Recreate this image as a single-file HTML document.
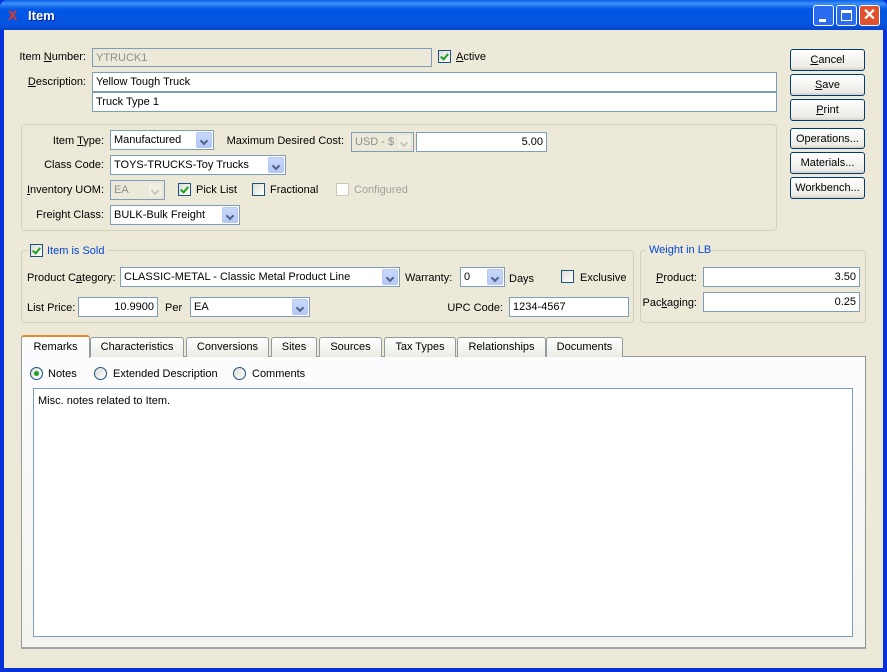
<!DOCTYPE html>
<html><head><style>
*{box-sizing:border-box;margin:0;padding:0}
body{width:887px;height:672px;overflow:hidden;background:#0831D9;font-family:"Liberation Sans",sans-serif;font-size:11px;color:#000;position:relative}
.win{position:absolute;left:4px;top:30px;width:879px;height:638px;background:#ECE9D8}
.title{position:absolute;left:0;top:0;width:887px;height:30px;background:linear-gradient(#0A5FEB 0%,#3D8FF7 12%,#0058E6 30%,#0553E0 80%,#0846C8 100%);border-radius:7px 7px 0 0}
.a{position:absolute;white-space:nowrap}
.in{position:absolute;border:1px solid #7F9DB9;background:#fff;padding:3px 3px;height:20px;line-height:13px;white-space:nowrap;overflow:hidden}
.r{text-align:right}
.dis{background:#ECE9D8;color:#8E8E8E}
.arr{position:absolute;right:1px;top:1px;bottom:1px;width:16px;background:linear-gradient(#C9D9FB,#B4C8F6);border-radius:2px;border:1px solid #B6C8F5}
.arr:after{content:"";position:absolute;left:4px;top:5px;width:4px;height:4px;border-right:2px solid #4D6185;border-bottom:2px solid #4D6185;transform:rotate(45deg)}
.dis .arr{background:#F1EFE4;border-color:#E4E2D6}
.dis .arr:after{border-color:#C9C7BA}
.cb{position:absolute;width:13px;height:13px;border:1px solid #1C5180;background:linear-gradient(135deg,#DCDCD7,#fff)}
.cb.ck:after{content:"";position:absolute;left:3px;top:1px;width:3px;height:6px;border-right:2px solid #21A121;border-bottom:2px solid #21A121;transform:rotate(40deg)}
.cb.d{border-color:#CAC8BB;background:#fff}
.btn{position:absolute;left:790px;width:75px;border:1px solid #003C74;border-radius:3px;background:linear-gradient(#fff,#ECEBE6 85%,#D6D0C5);text-align:center;line-height:20px}
.grp{position:absolute;border:1px solid #D0D0BF;border-radius:4px}
.tab{position:absolute;top:337px;height:20px;border:1px solid #919B9C;border-bottom:none;border-radius:3px 3px 0 0;background:linear-gradient(#fff,#ECEBE5);text-align:center;line-height:19px}
.rad{position:absolute;top:367px;width:13px;height:13px;border:1px solid #1C5180;border-radius:50%;background:linear-gradient(135deg,#DCDCD7,#fff)}
u{text-decoration:underline}
</style></head><body>
<div class="title">
 <div class="a" style="left:8px;top:7px;color:#E8361C;font-weight:bold;font-size:14px">X</div>
 <div class="a" style="left:28px;top:8px;color:#fff;font-weight:bold;font-size:13px;text-shadow:1px 1px #0A1E80">Item</div>
 <div class="a" style="left:813px;top:5px;width:21px;height:21px;border:1px solid #fff;border-radius:3px;background:#2B6BF0"><div style="position:absolute;left:5px;top:13px;width:7px;height:3px;background:#fff"></div></div>
 <div class="a" style="left:836px;top:5px;width:21px;height:21px;border:1px solid #fff;border-radius:3px;background:#2B6BF0"><div style="position:absolute;left:4px;top:4px;width:11px;height:11px;border:1px solid #fff;border-top:3px solid #fff"></div></div>
 <div class="a" style="left:859px;top:5px;width:21px;height:21px;border:1px solid #fff;border-radius:3px;background:#E0522E;color:#fff;font-weight:bold;font-size:16px;text-align:center;line-height:19px">✕</div>
</div>
<div class="win"></div>

<div class="a" style="right:801px;top:51px">Item <u>N</u>umber:</div>
<div class="in dis" style="left:92px;top:48px;width:340px;height:19px">YTRUCK1</div>
<div class="cb ck" style="left:438px;top:50px"></div>
<div class="a" style="left:456px;top:51px"><u>A</u>ctive</div>
<div class="a" style="right:801px;top:76px"><u>D</u>escription:</div>
<div class="in" style="left:92px;top:72px;width:685px">Yellow Tough Truck</div>
<div class="in" style="left:92px;top:92px;width:685px">Truck Type 1</div>

<div class="btn" style="top:49px;height:22px"><u>C</u>ancel</div>
<div class="btn" style="top:74px;height:22px"><u>S</u>ave</div>
<div class="btn" style="top:99px;height:22px"><u>P</u>rint</div>
<div class="btn" style="top:128px;height:21px">Operations...</div>
<div class="btn" style="top:152px;height:22px">Materials...</div>
<div class="btn" style="top:177px;height:22px">Workbench...</div>

<div class="grp" style="left:21px;top:124px;width:756px;height:107px"></div>
<div class="a" style="right:783px;top:135px">Item <u>T</u>ype:</div>
<div class="in" style="left:110px;top:130px;width:104px">Manufactured<div class="arr"></div></div>
<div class="a" style="right:543px;top:135px">Maximum Desired Cost:</div>
<div class="in dis" style="left:351px;top:132px;width:63px">USD - $<div class="arr"></div></div>
<div class="in r" style="left:416px;top:132px;width:131px">5.00</div>
<div class="a" style="right:783px;top:159px">Class Code:</div>
<div class="in" style="left:110px;top:155px;width:176px">TOYS-TRUCKS-Toy Trucks<div class="arr"></div></div>
<div class="a" style="right:783px;top:184px"><u>I</u>nventory UOM:</div>
<div class="in dis" style="left:110px;top:180px;width:55px">EA<div class="arr"></div></div>
<div class="cb ck" style="left:178px;top:183px"></div>
<div class="a" style="left:196px;top:184px">Pick List</div>
<div class="cb" style="left:252px;top:183px"></div>
<div class="a" style="left:270px;top:184px">Fractional</div>
<div class="cb d" style="left:336px;top:183px"></div>
<div class="a" style="left:354px;top:184px;color:#A0A0A0">Configured</div>
<div class="a" style="right:783px;top:209px">Freight Class:</div>
<div class="in" style="left:110px;top:205px;width:130px">BULK-Bulk Freight<div class="arr"></div></div>

<div class="grp" style="left:21px;top:250px;width:613px;height:73px"></div>
<div class="a" style="left:28px;top:243px;width:80px;height:14px;background:#ECE9D8"></div>
<div class="cb ck" style="left:30px;top:244px"></div>
<div class="a" style="left:47px;top:245px;color:#0046D5">Item is Sold</div>
<div class="a" style="left:27px;top:272px">Product C<u>a</u>tegory:</div>
<div class="in" style="left:120px;top:267px;width:280px">CLASSIC-METAL - Classic Metal Product Line<div class="arr"></div></div>
<div class="a" style="left:405px;top:272px">Warranty:</div>
<div class="in" style="left:460px;top:267px;width:45px">0<div class="arr"></div></div>
<div class="a" style="left:509px;top:273px">Days</div>
<div class="cb" style="left:561px;top:270px"></div>
<div class="a" style="left:580px;top:272px">Exclusive</div>
<div class="a" style="left:27px;top:302px">List Price:</div>
<div class="in r" style="left:78px;top:297px;width:80px">10.9900</div>
<div class="a" style="left:165px;top:302px">Per</div>
<div class="in" style="left:190px;top:297px;width:120px">EA<div class="arr"></div></div>
<div class="a" style="right:384px;top:302px">UPC Code:</div>
<div class="in" style="left:509px;top:297px;width:120px">1234-4567</div>

<div class="grp" style="left:640px;top:250px;width:226px;height:73px"></div>
<div class="a" style="left:646px;top:243px;width:66px;height:14px;background:#ECE9D8;color:#0046D5;padding-left:3px;padding-top:1px">Weight in LB</div>
<div class="a" style="right:190px;top:272px"><u>P</u>roduct:</div>
<div class="in r" style="left:703px;top:267px;width:157px">3.50</div>
<div class="a" style="right:190px;top:297px">Pac<u>k</u>aging:</div>
<div class="in r" style="left:703px;top:292px;width:157px">0.25</div>

<div class="a" style="left:21px;top:356px;width:845px;height:293px;border:1px solid #919B9C;border-right-color:#8A918F;border-bottom:2px solid #A0A6A5;background:linear-gradient(#FCFCFE,#F4F3EE)"></div>
<div class="tab" style="left:90px;width:94px">Characteristics</div>
<div class="tab" style="left:186px;width:83px">Conversions</div>
<div class="tab" style="left:271px;width:46px">Sites</div>
<div class="tab" style="left:319px;width:63px">Sources</div>
<div class="tab" style="left:384px;width:72px">Tax Types</div>
<div class="tab" style="left:457px;width:89px">Relationships</div>
<div class="tab" style="left:546px;width:77px">Documents</div>
<div class="tab" style="left:21px;top:335px;width:69px;height:23px;background:#FCFCFE;border-top:2px solid #E68B2C;line-height:20px">Remarks</div>

<div class="rad" style="left:30px"><div style="position:absolute;left:3px;top:3px;width:5px;height:5px;border-radius:50%;background:#21A121"></div></div>
<div class="a" style="left:48px;top:368px">Notes</div>
<div class="rad" style="left:94px"></div>
<div class="a" style="left:113px;top:368px">Extended Description</div>
<div class="rad" style="left:233px"></div>
<div class="a" style="left:252px;top:368px">Comments</div>
<div class="a" style="left:33px;top:388px;width:820px;height:249px;border:1px solid #7F9DB9;background:#fff;padding:6px 4px">Misc. notes related to Item.</div>
</body></html>
